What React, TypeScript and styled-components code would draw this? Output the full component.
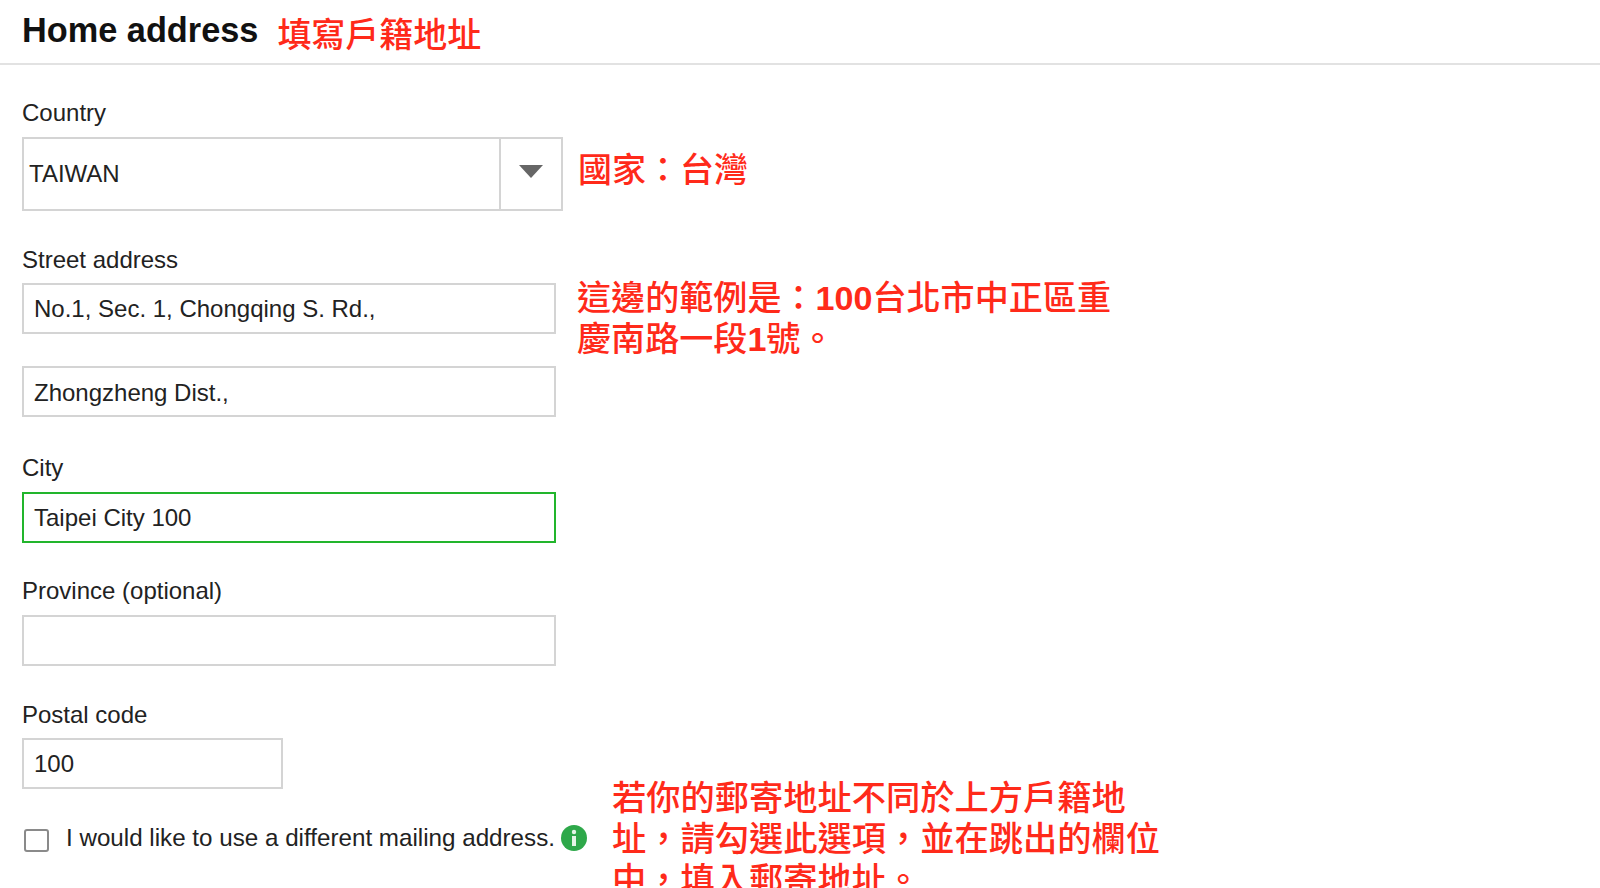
import styled, { createGlobalStyle } from "styled-components";

const GlobalStyle = createGlobalStyle`
  html, body {
    margin: 0;
    padding: 0;
    background: #fff;
  }
  body {
    font-family: "Liberation Sans", "Noto Sans CJK TC", sans-serif;
    color: #222;
  }
`;

const Page = styled.div`
  width: 1600px;
  height: 888px;
  overflow: hidden;
`;

const Header = styled.div`
  height: 63px;
  box-sizing: content-box;
  border-bottom: 2px solid #e2e2e2;
  padding-left: 22px;
  display: flex;
  align-items: center;
  gap: 19px;
`;

const Title = styled.h1`
  margin: 0 0 4px;
  font-size: 34.3px;
  line-height: 60px;
  font-weight: 700;
  color: #111;
`;

const Note = styled.div<{ $size?: number }>`
  font-family: "Liberation Sans", "Noto Sans CJK TC", sans-serif;
  font-size: ${(p) => p.$size || 34}px;
  line-height: 41px;
  font-weight: 500;
  color: #ff2a1a;
`;

const Digits = styled.span`
  font-weight: 700;
`;

const HeaderNote = styled(Note)`
  margin-top: 6px;
  line-height: 50px;
`;

const Form = styled.div`
  padding: 33px 0 0 22px;
`;

const Field = styled.div<{ $after?: number }>`
  margin-bottom: ${(p) => p.$after ?? 34}px;
`;

const Label = styled.div<{ $gap?: number }>`
  font-size: 24px;
  line-height: 30px;
  margin-bottom: ${(p) => p.$gap ?? 9}px;
  color: #222;
`;

const Row = styled.div`
  display: flex;
  align-items: flex-start;
`;

const SelectBox = styled.div`
  width: 541px;
  height: 74px;
  box-sizing: border-box;
  border: 2px solid #d4d4d4;
  display: flex;
`;

const SelectValue = styled.div`
  flex: 1;
  padding-left: 5px;
  display: flex;
  align-items: center;
  font-size: 24px;
`;

const SelectArrow = styled.div`
  width: 60px;
  border-left: 2px solid #d4d4d4;
  display: flex;
  align-items: center;
  justify-content: center;
  padding-bottom: 6px;

  &::after {
    content: "";
    border-left: 12px solid transparent;
    border-right: 12px solid transparent;
    border-top: 13px solid #666;
  }
`;

const Input = styled.div<{ $width?: number; $active?: boolean; $nudge?: number }>`
  width: ${(p) => p.$width || 534}px;
  height: 51px;
  box-sizing: border-box;
  border: 2px solid ${(p) => (p.$active ? "#22b52c" : "#d4d4d4")};
  padding: ${(p) => p.$nudge || 0}px 0 0 10px;
  display: flex;
  align-items: center;
  font-size: 24px;
  color: #222;
`;

const InputStack = styled.div`
  display: flex;
  flex-direction: column;
  gap: 32px;
`;

const CountryNote = styled(Note)`
  margin: 13px 0 0 15px;
`;

const StreetNote = styled(Note)`
  margin: -5px 0 0 21px;
  width: 560px;
`;

const BottomLeft = styled.div`
  display: flex;
  flex-direction: column;
`;

const CheckRow = styled.label`
  display: flex;
  align-items: center;
  font-size: 24.2px;
  height: 32px;
  color: #222;
`;

const CheckBox = styled.span`
  width: 25px;
  height: 23px;
  box-sizing: border-box;
  margin: 5px 17px 0 2px;
  border: 2px solid #8a8a8a;
  border-radius: 3px;
  background: #fff;
`;

const InfoIcon = styled.svg`
  width: 26px;
  height: 26px;
  margin-left: 6px;
`;

const MailingNote = styled(Note)`
  margin: 78px 0 0 25px;
  width: 560px;
`;

const App = () => {
  return (
    <Page>
      <GlobalStyle />
      <Header>
        <Title>Home address</Title>
        <HeaderNote>填寫戶籍地址</HeaderNote>
      </Header>
      <Form>
        <Field>
          <Label>Country</Label>
          <Row>
            <SelectBox>
              <SelectValue>TAIWAN</SelectValue>
              <SelectArrow />
            </SelectBox>
            <CountryNote>國家：台灣</CountryNote>
          </Row>
        </Field>
        <Field $after={36}>
          <Label $gap={8}>Street address</Label>
          <Row>
            <InputStack>
              <Input>No.1, Sec. 1, Chongqing S. Rd.,</Input>
              <Input $nudge={3}>Zhongzheng Dist.,</Input>
            </InputStack>
            <StreetNote $size={34.1}>
              這邊的範例是：<Digits>100</Digits>台北市中正區重慶南路一段<Digits>1</Digits>號。
            </StreetNote>
          </Row>
        </Field>
        <Field $after={33}>
          <Label>City</Label>
          <Input $active>Taipei City 100</Input>
        </Field>
        <Field>
          <Label>Province (optional)</Label>
          <Input />
        </Field>
        <Row>
          <BottomLeft>
            <Field $after={33}>
              <Label $gap={8}>Postal code</Label>
              <Input $width={261}>100</Input>
            </Field>
            <CheckRow>
              <CheckBox />
              I would like to use a different mailing address.
              <InfoIcon viewBox="0 0 26 26">
                <circle cx="13" cy="13" r="13" fill="#2ea84a" />
                <circle cx="13" cy="7" r="2.2" fill="#e4f5e6" />
                <rect x="11" y="11" width="4" height="10" fill="#e4f5e6" />
              </InfoIcon>
            </CheckRow>
          </BottomLeft>
          <MailingNote $size={34.25}>
            若你的郵寄地址不同於上方戶籍地址，請勾選此選項，並在跳出的欄位中，填入郵寄地址。
          </MailingNote>
        </Row>
      </Form>
    </Page>
  );
};

export default App;
